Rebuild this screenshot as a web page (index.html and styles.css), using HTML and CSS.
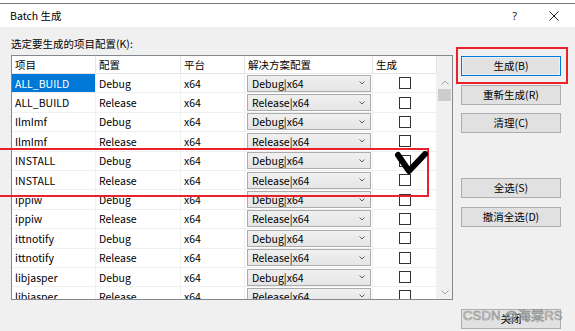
FILE: index.html
```html
<!DOCTYPE html>
<html>
<head>
<meta charset="utf-8">
<link rel="stylesheet" href="styles.css">
</head>
<body>
<div class="dialog">
  <div class="titlebar">
    <span class="title">Batch 生成</span>
    <div class="title-btns">
      <span class="help">?</span>
      <svg class="close-x" width="10" height="10" viewBox="0 0 10 10"><path d="M0.5 0.5 L9.5 9.5 M9.5 0.5 L0.5 9.5" stroke="#1a1a1a" stroke-width="1" fill="none"/></svg>
    </div>
  </div>
  <div class="content">
    <div class="left">
      <div class="label">选定要生成的项目配置(K):</div>
      <div class="list">
        <div class="list-main">
          <div class="row header">
            <div class="cell">项目</div>
            <div class="cell">配置</div>
            <div class="cell">平台</div>
            <div class="cell">解决方案配置</div>
            <div class="cell">生成</div>
          </div>
          <div class="row"><div class="cell sel">ALL_BUILD</div><div class="cell">Debug</div><div class="cell">x64</div><div class="cell combo-cell"><div class="combo"><span>Debug|x64</span><svg width="6" height="4" viewBox="0 0 6 4"><path d="M0.5 0.5 L3 3 L5.5 0.5" stroke="#606060" fill="none"/></svg></div></div><div class="cell chk-cell"><span class="chk"></span></div></div>
          <div class="row"><div class="cell">ALL_BUILD</div><div class="cell">Release</div><div class="cell">x64</div><div class="cell combo-cell"><div class="combo"><span>Release|x64</span><svg width="6" height="4" viewBox="0 0 6 4"><path d="M0.5 0.5 L3 3 L5.5 0.5" stroke="#606060" fill="none"/></svg></div></div><div class="cell chk-cell"><span class="chk"></span></div></div>
          <div class="row"><div class="cell">IlmImf</div><div class="cell">Debug</div><div class="cell">x64</div><div class="cell combo-cell"><div class="combo"><span>Debug|x64</span><svg width="6" height="4" viewBox="0 0 6 4"><path d="M0.5 0.5 L3 3 L5.5 0.5" stroke="#606060" fill="none"/></svg></div></div><div class="cell chk-cell"><span class="chk"></span></div></div>
          <div class="row"><div class="cell">IlmImf</div><div class="cell">Release</div><div class="cell">x64</div><div class="cell combo-cell"><div class="combo"><span>Release|x64</span><svg width="6" height="4" viewBox="0 0 6 4"><path d="M0.5 0.5 L3 3 L5.5 0.5" stroke="#606060" fill="none"/></svg></div></div><div class="cell chk-cell"><span class="chk"></span></div></div>
          <div class="row"><div class="cell">INSTALL</div><div class="cell">Debug</div><div class="cell">x64</div><div class="cell combo-cell"><div class="combo"><span>Debug|x64</span><svg width="6" height="4" viewBox="0 0 6 4"><path d="M0.5 0.5 L3 3 L5.5 0.5" stroke="#606060" fill="none"/></svg></div></div><div class="cell chk-cell"><span class="chk"></span></div></div>
          <div class="row"><div class="cell">INSTALL</div><div class="cell">Release</div><div class="cell">x64</div><div class="cell combo-cell"><div class="combo"><span>Release|x64</span><svg width="6" height="4" viewBox="0 0 6 4"><path d="M0.5 0.5 L3 3 L5.5 0.5" stroke="#606060" fill="none"/></svg></div></div><div class="cell chk-cell"><span class="chk"></span></div></div>
          <div class="row"><div class="cell">ippiw</div><div class="cell">Debug</div><div class="cell">x64</div><div class="cell combo-cell"><div class="combo"><span>Debug|x64</span><svg width="6" height="4" viewBox="0 0 6 4"><path d="M0.5 0.5 L3 3 L5.5 0.5" stroke="#606060" fill="none"/></svg></div></div><div class="cell chk-cell"><span class="chk"></span></div></div>
          <div class="row"><div class="cell">ippiw</div><div class="cell">Release</div><div class="cell">x64</div><div class="cell combo-cell"><div class="combo"><span>Release|x64</span><svg width="6" height="4" viewBox="0 0 6 4"><path d="M0.5 0.5 L3 3 L5.5 0.5" stroke="#606060" fill="none"/></svg></div></div><div class="cell chk-cell"><span class="chk"></span></div></div>
          <div class="row"><div class="cell">ittnotify</div><div class="cell">Debug</div><div class="cell">x64</div><div class="cell combo-cell"><div class="combo"><span>Debug|x64</span><svg width="6" height="4" viewBox="0 0 6 4"><path d="M0.5 0.5 L3 3 L5.5 0.5" stroke="#606060" fill="none"/></svg></div></div><div class="cell chk-cell"><span class="chk"></span></div></div>
          <div class="row"><div class="cell">ittnotify</div><div class="cell">Release</div><div class="cell">x64</div><div class="cell combo-cell"><div class="combo"><span>Release|x64</span><svg width="6" height="4" viewBox="0 0 6 4"><path d="M0.5 0.5 L3 3 L5.5 0.5" stroke="#606060" fill="none"/></svg></div></div><div class="cell chk-cell"><span class="chk"></span></div></div>
          <div class="row"><div class="cell">libjasper</div><div class="cell">Debug</div><div class="cell">x64</div><div class="cell combo-cell"><div class="combo"><span>Debug|x64</span><svg width="6" height="4" viewBox="0 0 6 4"><path d="M0.5 0.5 L3 3 L5.5 0.5" stroke="#606060" fill="none"/></svg></div></div><div class="cell chk-cell"><span class="chk"></span></div></div>
          <div class="row"><div class="cell">libjasper</div><div class="cell">Release</div><div class="cell">x64</div><div class="cell combo-cell"><div class="combo"><span>Release|x64</span><svg width="6" height="4" viewBox="0 0 6 4"><path d="M0.5 0.5 L3 3 L5.5 0.5" stroke="#606060" fill="none"/></svg></div></div><div class="cell chk-cell"><span class="chk"></span></div></div>
        </div>
        <div class="vscroll">
          <svg class="arrow-up" width="8" height="5" viewBox="0 0 8 5"><path d="M0.5 4.5 L4 1 L7.5 4.5" stroke="#a0a0a0" fill="none"/></svg>
          <div class="thumb"></div>
          <div class="track"></div>
          <svg class="arrow-down" width="8" height="5" viewBox="0 0 8 5"><path d="M0.5 0.5 L4 4 L7.5 0.5" stroke="#a0a0a0" fill="none"/></svg>
        </div>
      </div>
    </div>
    <div class="right">
      <div class="btn-group">
        <button class="btn focused">生成(B)</button>
        <button class="btn">重新生成(R)</button>
        <button class="btn">清理(C)</button>
      </div>
      <div class="btn-group second">
        <button class="btn">全选(S)</button>
        <button class="btn">撤消全选(D)</button>
      </div>
      <button class="btn closebtn">关闭</button>
    </div>
  </div>
  <div class="mark mark-build"></div>
  <div class="mark mark-install"></div>
  <svg class="handcheck" width="40" height="28" viewBox="0 0 40 28"><path d="M6 6 L17 22 L33 5" stroke="#000" stroke-width="6" stroke-linecap="round" stroke-linejoin="round" fill="none"/></svg>
  <div class="watermark">CSDN @海棠RS</div>
</div>
</body>
</html>
```

FILE: styles.css
```css
* { box-sizing: border-box; }
html, body { margin: 0; padding: 0; }
body {
  width: 575px;
  height: 331px;
  overflow: hidden;
  background: #f0f0f0;
  font-family: "Noto Sans CJK SC", "Noto Sans", sans-serif;
  font-size: 10.5px;
  color: #000;
}
.dialog {
  position: relative;
  width: 575px;
  height: 331px;
  background: #f0f0f0;
  border-top: 3px solid #ffffff;
}
.titlebar {
  height: 24px;
  background: #fff;
  border-top: 1px solid #7a7a7a;
  display: flex;
  align-items: center;
  justify-content: space-between;
  padding: 0 16px 0 10px;
}
.title { font-size: 10.5px; color: #000; }
.title-btns { display: flex; align-items: center; gap: 32px; }
.help { font-size: 11px; color: #1a1a1a; font-family: "Noto Sans", sans-serif; }
.close-x { display: block; }

.content {
  display: flex;
  padding-left: 11px;
}
.left { width: 442px; }
.label {
  margin-top: 9px;
  height: 15px;
  line-height: 15px;
  margin-bottom: 4px;
}
.list {
  width: 442px;
  height: 245px;
  border: 1px solid #828790;
  background: #fff;
  display: flex;
  overflow: hidden;
}
.list-main { width: 425px; overflow: hidden; }
.row {
  display: grid;
  grid-template-columns: 84px 85px 64px 128px 64px;
  height: 19.4px;
}
.row .cell {
  border-right: 1px solid #f0f0f0;
  border-bottom: 1px solid #f0f0f0;
  padding-left: 3px;
  display: flex;
  align-items: center;
  white-space: nowrap;
  overflow: hidden;
}
.row.header { height: 18px; }
.row.header .cell {
  border-right: 1px solid #e5e5e5;
  border-bottom: 1px solid #e5e5e5;
  padding-left: 3px;
}
.cell.sel {
  background: #0078d7;
  color: #fff;
}
.cell.combo-cell { padding: 0 1px 0 2px; }
.combo {
  width: 100%;
  height: 17px;
  border: 1px solid #acacac;
  background: linear-gradient(#f0f0f0, #e5e5e5);
  display: flex;
  align-items: center;
  justify-content: space-between;
  padding: 0 5px 0 4px;
  color: #000;
}
.combo svg { display: block; }
.cell.chk-cell { justify-content: center; padding-left: 0; }
.chk {
  width: 12px;
  height: 12px;
  border: 1px solid #333;
  background: #fff;
  display: block;
}
.vscroll {
  width: 15px;
  background: #f0f0f0;
  display: flex;
  flex-direction: column;
  align-items: center;
  padding-top: 24px;
  padding-bottom: 4px;
}
.arrow-up, .arrow-down { display: block; }
.thumb {
  margin-top: 4px;
  width: 13px;
  height: 12px;
  background: #cdcdcd;
}
.track { flex: 1; }

.right {
  margin-left: 8px;
  width: 100px;
  display: flex;
  flex-direction: column;
  padding-top: 29px;
}
.btn-group { display: flex; flex-direction: column; gap: 8.5px; }
.btn-group.second { margin-top: 45px; }
.btn {
  width: 100px;
  height: 20px;
  border: 1px solid #adadad;
  background: #e1e1e1;
  font-family: "Noto Sans CJK SC", "Noto Sans", sans-serif;
  font-size: 10.5px;
  color: #000;
  padding: 0;
  margin: 0;
  line-height: 18px;
}
.btn.focused {
  border: 1px solid #0078d7;
  box-shadow: inset 0 0 0 1px #e5f1fb;
}
.closebtn { margin-top: 82px; }

.mark {
  position: absolute;
  border: 2px solid #e8222a;
}
.mark-build {
  left: 456px;
  top: 44px;
  width: 112px;
  height: 37px;
}
.mark-install {
  left: -3px;
  top: 145px;
  width: 432px;
  height: 49px;
}
.handcheck {
  position: absolute;
  left: 392px;
  top: 146px;
}
.watermark {
  position: absolute;
  left: 463px;
  top: 302px;
  font-family: "Liberation Sans", "Noto Sans CJK SC", sans-serif;
  font-size: 13px;
  color: rgba(255,255,255,0.15);
  -webkit-text-stroke: 0.6px #8a8a8a;
  letter-spacing: 0.2px;
}
```
